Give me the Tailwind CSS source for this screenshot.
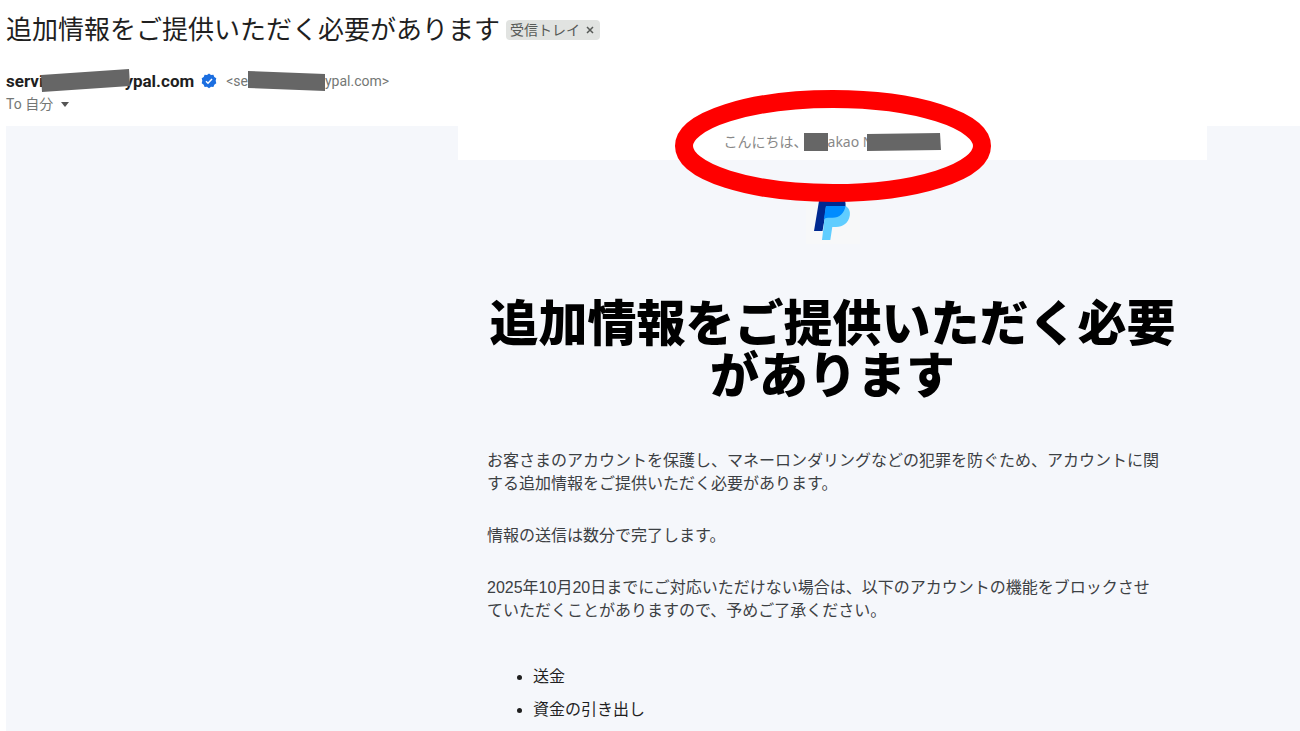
<!DOCTYPE html>
<html lang="ja">
<head>
  <meta charset="UTF-8" />
  <meta name="viewport" content="width=device-width, initial-scale=1.0"/>
  <title>追加情報をご提供いただく必要があります</title>
  <script src="https://cdn.jsdelivr.net/npm/@tailwindcss/browser@4"></script>
</head>
<body class="bg-white min-h-screen flex flex-col overflow-x-hidden font-['Liberation_Sans','Noto_Sans_CJK_JP',sans-serif]">

  <!-- Mail header -->
  <header class="pl-[6px] pt-3 pb-3 font-[Roboto,'Noto_Sans_CJK_JP',sans-serif]">
    <div class="flex items-center gap-[6px]">
      <h1 class="text-[26px] leading-9 text-[#1f1f1f] whitespace-nowrap">追加情報をご提供いただく必要があります</h1>
      <div class="flex items-center gap-1 h-5 px-1 rounded bg-[#e1e3e1] text-[14px] leading-5 text-[#575a57] whitespace-nowrap">
        <span>受信トレイ</span>
        <button type="button" aria-label="ラベルを削除" class="w-3 h-5 flex items-center justify-center">
          <svg class="w-2 h-2" viewBox="0 0 8 8" fill="none" stroke="#575a57" stroke-width="1.5"><path d="M1 1l6 6M7 1L1 7"/></svg>
        </button>
      </div>
    </div>

    <div class="flex items-center mt-[23px] h-5 whitespace-nowrap leading-5">
      <span class="text-[17px] font-bold text-[#1f1f1f]">servi</span>
      <svg class="relative w-[92px] h-6 -ml-[3px] -mr-2 shrink-0" viewBox="0 0 92 24"><path d="M1 6L89 0l1 17L2 23z" fill="#666"/></svg>
      <span class="text-[17px] font-bold text-[#1f1f1f]">ypal.com</span>
      <!-- Verified badge -->
      <svg class="w-4 h-4 ml-[7px] shrink-0" viewBox="0 0 16 16">
        <path d="M8 .5l2 1.4 2.4-.2.9 2.2 2 1.4-.6 2.5.6 2.5-2 1.4-.9 2.3-2.4-.3L8 15.3l-2-1.6-2.400.3-.9-2.300-2-1.400.6-2.500-.6-2.500 2-1.400.9-2.200 2.400.2z" fill="#1b6ee0"/>
        <path d="M5 8.200l2 2L11 6" fill="none" stroke="#fff" stroke-width="1.500"/>
      </svg>
      <span class="ml-[9px] text-[14px] text-[#747775]">&lt;se</span>
      <svg class="relative w-[77px] h-5 shrink-0" viewBox="0 0 77 20"><path d="M0 0l77 3v17L0 17z" fill="#666"/></svg>
      <span class="text-[14px] text-[#747775]">ypal.com&gt;</span>
    </div>

    <button type="button" class="flex items-center gap-2 mt-[3px] h-5 text-[14px] leading-5 text-[#747775]">
      <span>To 自分</span>
      <svg class="w-2 h-[5px]" viewBox="0 0 8 5"><path d="M0 0h8L4 5z" fill="#555"/></svg>
    </button>
  </header>

  <!-- Mail body -->
  <main class="grow ml-[6px] bg-[#f5f7fb] grid grid-cols-[452fr_749fr_93fr]">
    <div class="col-start-2 min-w-0">
      <div class="relative h-[34px] pb-[2px] bg-white flex items-center justify-center text-[14px] leading-5 text-[#888] whitespace-nowrap">
        <span>こんにちは、</span>
        <svg class="w-6 h-[18px] -ml-1" viewBox="0 0 24 18"><path d="M0 0h24v18H0z" fill="#666"/></svg>
        <span class="font-['Noto_Sans',sans-serif]">akao N</span>
        <svg class="relative w-[74px] h-5 -ml-[6px]" viewBox="0 0 74 20"><path d="M0 2l73-1 1 17-74 1z" fill="#666"/></svg>
        <!-- Marker ring -->
        <svg class="absolute left-1/2 -translate-x-1/2 -top-9 w-[318px] h-[112px] z-10 pointer-events-none" viewBox="0 0 318 112">
          <ellipse cx="159" cy="56" rx="149" ry="47" fill="none" stroke="#f00" stroke-width="18"/>
        </svg>
      </div>

      <div class="flex justify-center pt-6">
        <svg class="w-[58px] h-[64px]" viewBox="804 184 58 64" role="img" aria-label="PayPal">
          <path d="M806 184h54v60h-54z" fill="#f7f8f9"/>
          <path d="M820 195h14c8 0 12.500 4.500 11.500 11-1 7-6 11-13 11h-7.500L822.500 231H814z" fill="#002991"/>
          <path d="M826 206h19.500c3.500 2 5 5.500 4.300 9.500C848.500 223 843 227 836 227h-3.700l-2 13H822z" fill="#60cdff"/>
          <path d="M826 206h19.500c-1 7-6 11.800-13 11.800h-4.500c-2 0-3.500.7-4.300 2z" fill="#008cff"/>
        </svg>
      </div>

      <div class="px-[29px]">
        <h2 class="mt-[50px] -mx-2 text-center text-[49px] leading-[52px] font-black text-black">追加情報をご提供いただく必要<br>があります</h2>

        <div class="mt-[47px] space-y-[29px] text-[16px] leading-[23px] text-[#3c4043]">
          <p>お客さまのアカウントを保護し、マネーロンダリングなどの犯罪を防ぐため、アカウントに関<br>する追加情報をご提供いただく必要があります。</p>
          <p>情報の送信は数分で完了します。</p>
          <p>2025年10月20日までにご対応いただけない場合は、以下のアカウントの機能をブロックさせ<br>ていただくことがありますので、予めご了承ください。</p>
        </div>

        <ul class="mt-[43px] pl-[46px] list-disc space-y-[10px] text-[16px] leading-[23px] text-[#1f1f1f]">
          <li>送金</li>
          <li>資金の引き出し</li>
        </ul>
      </div>
    </div>
  </main>

</body>
</html>
